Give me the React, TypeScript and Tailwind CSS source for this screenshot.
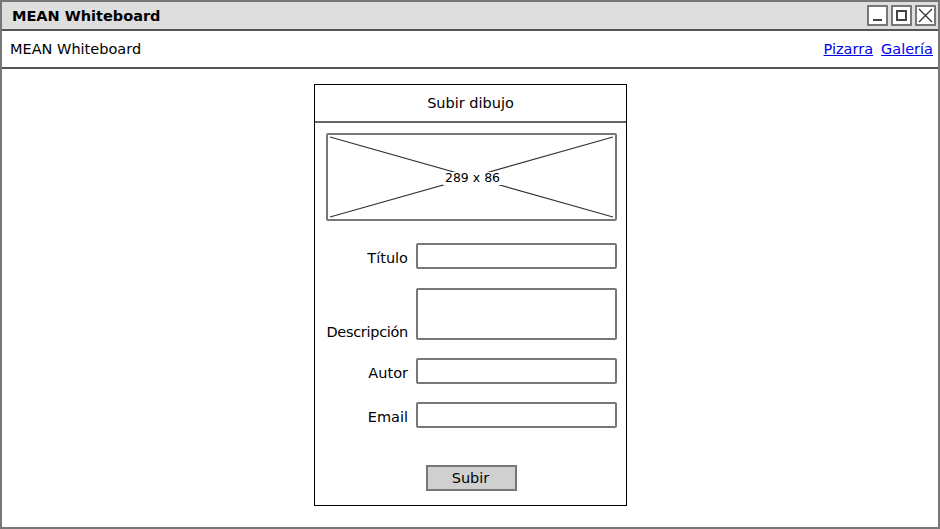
import React from 'react';

const Field: React.FC<{ label: string; tall?: boolean; className?: string }> = ({ label, tall, className }) => (
  <div className={`flex ${tall ? 'items-end' : 'items-center'} gap-[8px] ${className ?? ''}`}>
    <span className={`w-[93px] text-right leading-none ${tall ? 'pb-[1px] tracking-[-0.3px]' : 'pt-[5px]'}`}>{label}</span>
    <div className={`w-[201px] ${tall ? 'h-[52px]' : 'h-[26px]'} border-2 border-[#777] rounded-[2px] bg-white`} />
  </div>
);

const App: React.FC = () => {
  return (
    <div
      className="w-[940px] h-[529px] bg-white border-2 border-[#777] flex flex-col text-[14.5px] text-black"
      style={{ fontFamily: '"DejaVu Sans", Verdana, sans-serif' }}
    >
      <div className="h-[29px] bg-[#dedede] border-b-2 border-[#555] flex items-center justify-between pl-[10px] pr-[2px]">
        <span className="font-bold pt-[2px]">MEAN Whiteboard</span>
        <div className="flex gap-[3px]">
          <div className="w-[21px] h-[21px] border-2 border-[#777] bg-white flex items-end justify-center pb-[3px]">
            <div className="w-[9px] h-[2px] bg-[#444]" />
          </div>
          <div className="w-[21px] h-[21px] border-2 border-[#777] bg-white flex items-center justify-center">
            <div className="w-[11px] h-[11px] border-2 border-[#444]" />
          </div>
          <div className="w-[21px] h-[21px] border-2 border-[#777] bg-white flex items-center justify-center">
            <svg width="15" height="15" viewBox="0 0 15 15">
              <path d="M1 1 L14 14 M14 1 L1 14" stroke="#333" strokeWidth="1.3" />
            </svg>
          </div>
        </div>
      </div>
      <div className="h-[38px] border-b-2 border-[#555] flex items-center justify-between pl-[8px] pr-[5px] pt-[2px]">
        <span>MEAN Whiteboard</span>
        <div className="flex gap-[8px]">
          <a href="#" className="text-[#0000ee] underline">Pizarra</a>
          <a href="#" className="text-[#0000ee] underline">Galería</a>
        </div>
      </div>
      <div className="flex-1 flex pt-[15px] pl-[312px]">
        <div className="w-[313px] h-[422px] border border-black flex flex-col">
          <div className="h-[38px] border-b-2 border-[#666] flex items-center justify-center pt-[1px]">
            Subir dibujo
          </div>
          <div className="pt-[10px] pl-[11px]">
            <div className="relative w-[291px] h-[88px] border-2 border-[#777] rounded-[2px]">
              <svg className="absolute inset-0" width="287" height="84" viewBox="0 0 287 84">
                <path d="M2 2 L285 82 M285 2 L2 82" stroke="#333" strokeWidth="1.2" />
              </svg>
              <div className="absolute inset-0 flex items-center justify-center pt-[3px] pl-[2px]">
                <span className="bg-white px-[2px] text-[12.5px] leading-none">289 x 86</span>
              </div>
            </div>
          </div>
          <div className="flex flex-col pt-[22px]">
            <Field label="Título" />
            <Field label="Descripción" tall className="mt-[19px]" />
            <Field label="Autor" className="mt-[18px]" />
            <Field label="Email" className="mt-[18px]" />
          </div>
          <div className="pt-[37px] pl-[111px]">
            <div className="w-[91px] h-[26px] bg-[#d0d0d0] border-2 border-[#777] flex items-center justify-center pr-[2px] pt-[1px]">
              Subir
            </div>
          </div>
        </div>
      </div>
    </div>
  );
};

export default App;
